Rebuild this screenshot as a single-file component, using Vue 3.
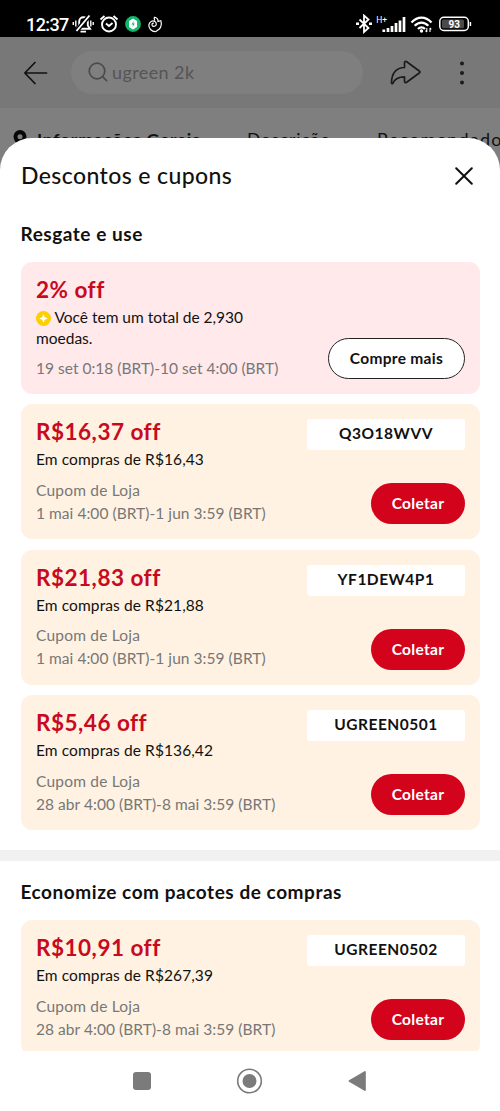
<script setup>
const shopCoupons = [
  { value: 'R$16,37 off', min: 'Em compras de R$16,43', date: '1 mai 4:00 (BRT)-1 jun 3:59 (BRT)', code: 'Q3O18WVV' },
  { value: 'R$21,83 off', min: 'Em compras de R$21,88', date: '1 mai 4:00 (BRT)-1 jun 3:59 (BRT)', code: 'YF1DEW4P1' },
  { value: 'R$5,46 off', min: 'Em compras de R$136,42', date: '28 abr 4:00 (BRT)-8 mai 3:59 (BRT)', code: 'UGREEN0501' },
]
const bundleCoupons = [
  { value: 'R$10,91 off', min: 'Em compras de R$267,39', date: '28 abr 4:00 (BRT)-8 mai 3:59 (BRT)', code: 'UGREEN0502' },
]
const sections = [
  { id: 'use', title: 'Resgate e use', coins: true, coupons: shopCoupons },
  { id: 'bundle', title: 'Economize com pacotes de compras', coins: false, coupons: bundleCoupons },
]
</script>

<template>
  <div class="phone">
    <div class="status">
      <span class="clock">12:37</span>
      <svg class="status-left" width="95" height="20" viewBox="0 0 95 20" fill="none" stroke="#fff" stroke-width="1.6">
        <path d="M5 14.800h13l-2.200-3.300V7.500c0-2.500-1.800-4.300-4.300-4.300S7.200 5 7.200 7.500v4zM8.500 17.600h5.500" stroke-width="1.900" />
        <path d="M4.500 17 17.500 1.500" stroke="#000" stroke-width="4.500" />
        <path d="M4.500 17 17.500 1.500" stroke-width="1.900" />
        <path d="M3.800 6.500v6M1.300 8v3M18.800 6.500v6M21.200 8v3" stroke-width="1.400" />
        <circle cx="37" cy="10.500" r="7" stroke-width="1.900" />
        <path d="m34 9.500 3 2.500 3.500-3M28.500 5.500l4-3.500M45.500 5.500l-4-3.500" stroke-width="1.900" />
        <circle cx="61" cy="10" r="7.900" fill="#12b76a" stroke="none" />
        <path d="m61 4.500 4 2.500v6l-4 2.500-4-2.500V7z" fill="#fff" stroke="none" />
        <path d="m61.700 7-2.200 3.500h1.500l-.4 2.500 2.200-3.500h-1.500z" fill="#12b76a" stroke="none" />
        <path d="M82.500 3c3 1 3.800 2.500 3.500 4.500l2.800-.8c1 3.300.7 6-1.500 8.300l-3.300 2.500c-2 .2-4-.5-5.500-2-2.700-2.600-2-6.800 1-8.300 2.500-1 5 .6 4.800 3-.2 2.200-3.300 3-4.200 1-.5-1.500.7-2.300 1.700-1.800M82.500 3c-.5 1-.5 2 .3 3.500" stroke-width="1.200" />
      </svg>
      <svg class="status-right" width="118" height="20" viewBox="0 0 118 20" fill="none" stroke="#fff">
        <path d="m3.500 5.500 9 8.500-4.500 4V1.500l4.500 4-9 8.500" stroke-width="1.800" />
        <path d="M0 9.700h3M13 9.700h3" stroke-width="2.400" />
        <path d="M27.800 18v-2.500M32 18v-4M36 18v-6M40 18V9M44 18V6.500M48 18V3" stroke-width="2.700" />
        <path d="M55.500 8.500c6-6.500 14-6.500 20 0M58.700 11.800c4-4.300 9.600-4.300 13.600 0M62 15c2-2.200 5-2.200 7 0" stroke-width="2.300" />
        <circle cx="65.500" cy="17" r="1.700" fill="#fff" stroke="none" />
        <path d="M70.800 14v4m0 0-1.300-1.300M74 18v-4m0 0 1.300 1.300" stroke-width="1.100" />
        <rect x="83.800" y="3.300" width="28.500" height="13.200" rx="4" stroke-width="1.500" />
        <rect x="86" y="5.500" width="22" height="8.800" rx="1.500" fill="#4a4a4a" stroke="none" />
        <path d="M114.400 8v4" stroke-width="1.500" />
        <text x="20.200" y="8.500" class="net">H+</text>
        <text x="98.200" y="13.800" class="pct">93</text>
      </svg>
    </div>

    <div class="topbar">
      <svg class="back" width="26" height="24" viewBox="0 0 26 24" fill="none" stroke="#111" stroke-width="1.700" stroke-linecap="round" stroke-linejoin="round">
        <path d="M23.500 12H2M12 1.500 1.800 12 12 22.500" />
      </svg>
      <div class="search">
        <svg width="20" height="20" viewBox="0 0 20 20" fill="none" stroke="#4b4b4b" stroke-width="1.700" stroke-linecap="round">
          <circle cx="9" cy="9" r="7.800" /><path d="m14.600 14.600 4 4" />
        </svg>
        <span>ugreen 2k</span>
      </div>
      <svg class="share" width="32" height="26" viewBox="0 0 32 26" fill="none" stroke="#1b1b1b" stroke-width="1.700" stroke-linejoin="round">
        <path d="M14.500 7.500V2.800c0-1.200 1.200-1.800 2.200-1.100L29.300 11c.8.600.8 1.400 0 2L16.700 22.300c-1 .7-2.200.1-2.200-1.100v-4.400c-6 0-9.500 1.500-11.700 6.500-.3.600-1.300.6-1.300-.3C1.500 13.500 6 7.500 14.500 7.500z" />
      </svg>
      <svg class="more" width="6" height="24" viewBox="0 0 6 24" fill="#1b1b1b">
        <circle cx="3" cy="2.500" r="2" /><circle cx="3" cy="12" r="2" /><circle cx="3" cy="21.500" r="2" />
      </svg>
    </div>

    <div class="tabs">
      <svg class="pin" width="14" height="20" viewBox="0 0 14 20">
        <path fill-rule="evenodd" fill="#080808" d="M7 0a6.500 6.500 0 0 1 6.500 6.500C13.500 11 7 18 7 18S.5 11 .5 6.500A6.500 6.500 0 0 1 7 0zm0 4.200a2.500 2.500 0 1 0 0 5 2.500 2.500 0 0 0 0-5z" />
      </svg>
      <span class="tab active">Informações Gerais</span>
      <span class="tab second">Descrição</span>
      <span class="tab third">Recomendados</span>
    </div>

    <div class="sheet">
      <header class="sheet-head">
        <h1>Descontos e cupons</h1>
        <svg width="18" height="18" viewBox="0 0 18 18" stroke="#111" stroke-width="2" stroke-linecap="round">
          <path d="m1.200 1.200 15.600 15.600M16.800 1.200 1.200 16.800" />
        </svg>
      </header>

      <div class="content">
        <section v-for="s in sections" :key="s.id" :class="['group', s.id]">
          <h2>{{ s.title }}</h2>
          <div class="list">
            <article v-if="s.coins" class="card coin">
              <div class="info">
                <p class="value">2% off</p>
                <p class="coins">
                  <svg width="15" height="15" viewBox="0 0 15 15">
                    <circle cx="7.500" cy="7.500" r="7.500" fill="#fdd000" />
                    <path d="M7.500 3.200 8.800 6.200 11.800 7.500 8.800 8.800 7.500 11.800 6.200 8.800 3.200 7.500 6.200 6.200z" fill="#fff" />
                  </svg>
                  Você tem um total de 2,930<br>moedas.
                </p>
                <p class="meta date">19 set 0:18 (BRT)-10 set 4:00 (BRT)</p>
              </div>
              <div class="side"><button class="btn outline">Compre mais</button></div>
            </article>
            <article v-for="c in s.coupons" :key="c.code" class="card">
              <div class="info">
                <p class="value">{{ c.value }}</p>
                <p class="min">{{ c.min }}</p>
                <p class="meta type">Cupom de Loja</p>
                <p class="meta date">{{ c.date }}</p>
              </div>
              <div class="side">
                <div class="code">{{ c.code }}</div>
                <button class="btn">Coletar</button>
              </div>
            </article>
          </div>
        </section>
      </div>

      <nav class="sysnav">
        <svg width="230" height="28" viewBox="0 0 230 28" fill="#7b7b7b">
          <rect x="0" y="5" width="18" height="18" rx="3" />
          <circle cx="116.500" cy="14" r="11.800" fill="none" stroke="#7b7b7b" stroke-width="1.600" />
          <circle cx="116.500" cy="14" r="7" />
          <path d="M216 13.300 231.500 4.200c.7-.4 1.300 0 1.300.7v18.200c0 .8-.6 1.100-1.300.7L216 14.700c-.6-.4-.6-1 0-1.400z" />
        </svg>
      </nav>
    </div>
  </div>
</template>

<style>
body { margin: 0; }
</style>

<style scoped>
* { box-sizing: border-box; }
h1, h2, p { margin: 0; }
.phone {
  width: 500px; height: 1111px; overflow: hidden;
  display: flex; flex-direction: column;
  background: #7f7f7f; color: #111;
  font-family: Lato, "Liberation Sans", sans-serif;
  white-space: nowrap;
}
.status { height: 37px; flex: none; background: #000; display: flex; align-items: flex-start; padding: 14px 0 0 26px; }
.clock { width: 46px; font: 500 18px/21px Roboto, sans-serif; color: #fff; letter-spacing: -.6px; }
.status-left { flex: none; }
.status-right { flex: none; margin-left: 189px; }
.net { font: 8.500px Roboto, sans-serif; fill: #fff; stroke: none; }
.pct { font: 700 10px Roboto, sans-serif; fill: #fff; stroke: none; text-anchor: middle; }
.topbar { height: 71px; flex: none; background: #787878; display: flex; align-items: center; padding-left: 23px; }
.back { flex: none; }
.search { width: 292px; height: 43px; margin-left: 22px; border-radius: 22px; background: #7f7f7f; display: flex; align-items: center; gap: 4px; padding: 0 0 1px 17px; font-size: 18px; color: #555; letter-spacing: .4px; }
.share { margin-left: 27px; }
.more { margin-left: 37px; }
.tabs { height: 72px; margin-bottom: -42px; flex: none; display: flex; padding: 21px 0 0 13px; }
.pin { flex: none; margin-top: 1px; }
.tab { flex: none; font-size: 17.500px; line-height: 21px; letter-spacing: .9px; width: 130px; }
.active { width: 210px; margin-left: 10px; font-weight: 700; letter-spacing: .75px; }
.third { font-size: 18px; letter-spacing: 1.200px; }
.sheet { position: relative; flex: 1; min-height: 0; display: flex; flex-direction: column; background: #fff; border-radius: 32px 32px 0 0; }
.sheet-head { height: 76px; flex: none; display: flex; align-items: center; justify-content: space-between; padding: 0 27px 0 21px; }
h1 { margin-top: -2px; font-size: 23px; font-weight: 500; letter-spacing: .4px; }
.content { height: 837px; flex: none; overflow: hidden; }
h2 { font-size: 19px; line-height: 24px; font-weight: 700; letter-spacing: .55px; padding: 8px 0 16px; }
.group { padding: 0 20px 0 20.500px; }
.use { height: 636px; }
.bundle { border-top: 11px solid #f1f1f1; padding-top: 11px; }
.list { display: flex; flex-direction: column; gap: 10.300px; }
.card { height: 135px; flex: none; display: flex; justify-content: space-between; padding: 14px 15px 0 15.500px; border-radius: 11px; background: #fff2e2; }
.coin { height: 132.200px; background: #ffe9eb; }
.value { font-size: 22.500px; line-height: 28px; font-weight: 700; letter-spacing: .5px; font-variant-ligatures: none; color: #c80a20; }
.min { font-size: 15.500px; line-height: 26px; letter-spacing: .1px; }
.meta { font-size: 15.500px; line-height: 23px; color: #777; letter-spacing: .05px; }
.type { margin-top: 6.500px; letter-spacing: .2px; }
.coins { margin-top: 3px; font-size: 15.500px; line-height: 21px; }
.coins svg { vertical-align: -3px; }
.coin .date { margin-top: 8px; letter-spacing: .02px; }
.side { display: flex; flex-direction: column; align-items: flex-end; }
.code { width: 158px; height: 31px; margin-top: 1px; border-radius: 3px; background: #fff; font-size: 15.500px; line-height: 29px; font-weight: 700; text-align: center; letter-spacing: .5px; }
.btn { width: 94px; height: 41px; margin-top: 33px; padding: 0; border: 0; border-radius: 21px; background: #d3031c; color: #fff; font: 700 15.500px/41px Lato, sans-serif; letter-spacing: .3px; }
.outline { width: 137px; margin-top: 62px; border: 1.300px solid #222; background: #fff; color: #111; line-height: 38px; padding-bottom: 1px; }
.sysnav { flex: 1; padding: 16px 0 0 133px; }
.sysnav svg { overflow: visible; display: block; }
</style>
